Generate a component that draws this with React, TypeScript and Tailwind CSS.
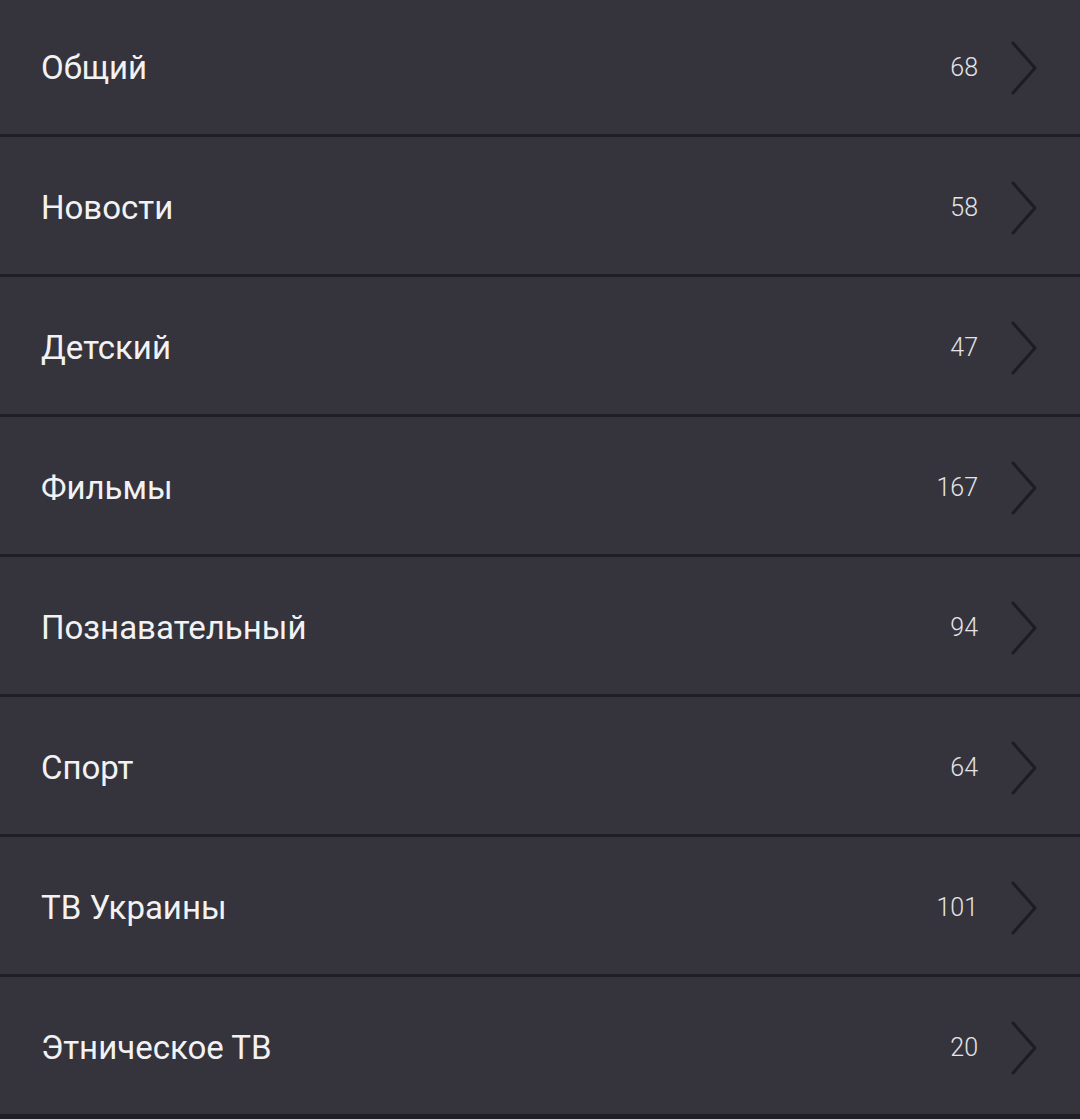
const CATEGORIES = [
  { name: "Общий", count: 68 },
  { name: "Новости", count: 58 },
  { name: "Детский", count: 47 },
  { name: "Фильмы", count: 167 },
  { name: "Познавательный", count: 94 },
  { name: "Спорт", count: 64 },
  { name: "ТВ Украины", count: 101 },
  { name: "Этническое ТВ", count: 20 },
];

const Chevron = () => (
  <svg width="28" height="54" viewBox="0 0 28 54" fill="none" className="shrink-0">
    <path
      d="M3 2 L25 27 L3 52"
      stroke="#1d1c22"
      strokeWidth="3"
      strokeLinecap="round"
      strokeLinejoin="round"
    />
  </svg>
);

const App = () => {
  return (
    <div
      className="w-[1080px] h-[1119px] overflow-hidden bg-[#1f1e24]"
      style={{ fontFamily: "Roboto, 'Noto Sans', sans-serif" }}
    >
      <div className="-mt-[3px] flex flex-col">
        {CATEGORIES.map((item) => (
          <div
            key={item.name}
            className="h-[140px] shrink-0 border-b-[3px] border-[#1f1e24] bg-[#35343c] flex items-center pt-[4px] pl-[41px] pr-[42px]"
          >
            <span className="flex-1 text-[33px] text-[#f2f2f4] leading-none">
              {item.name}
            </span>
            <span className="text-[25px] font-light text-[#e4e4e8] leading-none mr-[32px]">
              {item.count}
            </span>
            <Chevron />
          </div>
        ))}
      </div>
    </div>
  );
};

export default App;
